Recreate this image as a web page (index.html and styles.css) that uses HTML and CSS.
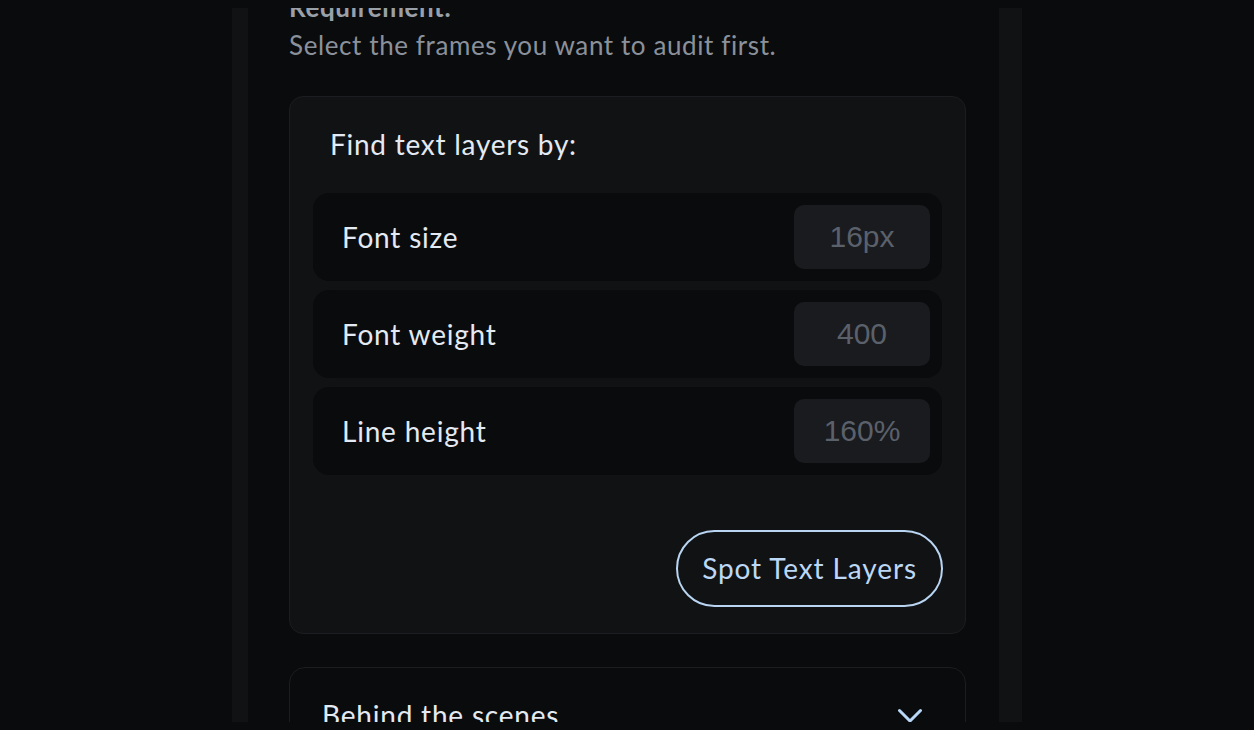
FILE: index.html
```html
<!DOCTYPE html>
<html lang="en">
<head>
<meta charset="utf-8">
<title>Text layer audit</title>
<link rel="stylesheet" href="styles.css">
</head>
<body>
<div class="frame">
  <div class="scroll">
    <div class="content">
      <h2 class="req-title">Requirement:</h2>
      <p class="req-text">Select the frames you want to audit first.</p>

      <section class="card">
        <h3 class="card-title">Find text layers by:</h3>
        <div class="rows">
          <div class="row">
            <span class="row-label">Font size</span>
            <span class="row-input">16px</span>
          </div>
          <div class="row">
            <span class="row-label">Font weight</span>
            <span class="row-input">400</span>
          </div>
          <div class="row">
            <span class="row-label">Line height</span>
            <span class="row-input">160%</span>
          </div>
        </div>
        <button class="spot-btn" type="button">Spot Text Layers</button>
      </section>

      <section class="accordion">
        <div class="acc-head">
          <span class="acc-title">Behind the scenes</span>
          <svg class="chev" width="26" height="16" viewBox="0 0 26 16" aria-hidden="true">
            <path d="M2.5 2.5 L13 13 L23.5 2.5" fill="none" stroke="#b8d6f5" stroke-width="3" stroke-linecap="round" stroke-linejoin="round"/>
          </svg>
        </div>
      </section>
    </div>
  </div>
</div>
</body>
</html>
```

FILE: styles.css
```css
html, body {
  background: #0a0b0c;
}
body {
  margin: 8px;
  font-family: Lato, "Open Sans", sans-serif;
}
.frame {
  width: 790px;
  height: 714px;
  margin: 0 auto;
  background: #111214;
  display: flex;
  padding: 0 23px 0 16px;
  box-sizing: border-box;
}
.scroll {
  flex: 1;
  background: #0a0b0c;
  overflow: hidden;
  padding: 0 33px 0 41px;
}
.content {
  margin-top: -20px;
}
.req-title {
  margin: 0;
  font-size: 26px;
  line-height: 38.4px;
  font-weight: 700;
  letter-spacing: 0.6px;
  color: #9aa0a8;
}
.req-text {
  margin: 0;
  font-size: 26px;
  line-height: 38.4px;
  letter-spacing: 0.6px;
  color: #8a919b;
}
.card {
  margin-top: 31px;
  background: #111214;
  border: 1px solid #1b1d20;
  border-radius: 14px;
  padding: 25px 23px 26px;
  display: flex;
  flex-direction: column;
}
.card-title {
  margin: 0 0 26px 17px;
  font-size: 28px;
  line-height: 44.8px;
  font-weight: 400;
  letter-spacing: 0.75px;
  color: #e4eaf3;
}
.rows {
  display: flex;
  flex-direction: column;
  gap: 9px;
}
.row {
  height: 88px;
  box-sizing: border-box;
  background: #0a0b0c;
  border-radius: 16px;
  display: flex;
  align-items: center;
  justify-content: space-between;
  padding: 0 12px 0 29px;
}
.row-label {
  font-size: 28px;
  letter-spacing: 0.8px;
  color: #e4eaf3;
}
.row-input {
  width: 136px;
  height: 64px;
  background: #1a1b1f;
  border-radius: 10px;
  display: flex;
  align-items: center;
  justify-content: center;
  font-family: "Liberation Sans", Arial, sans-serif;
  font-size: 30px;
  color: #5b616b;
}
.spot-btn {
  align-self: flex-end;
  margin-top: 55px;
  margin-right: -1px;
  height: 77px;
  box-sizing: border-box;
  padding: 0 24px;
  background: transparent;
  border: 2px solid #b9d5f2;
  border-radius: 39px;
  font-family: Lato, "Open Sans", sans-serif;
  font-size: 28px;
  letter-spacing: 0.9px;
  color: #bcd8f6;
  cursor: pointer;
}
.accordion {
  margin-top: 33px;
  border: 1px solid #1b1d20;
  border-radius: 16px;
  background: #0a0b0c;
  height: 120px;
}
.acc-head {
  display: flex;
  align-items: center;
  justify-content: space-between;
  padding: 25px 42px 0 32px;
}
.acc-title {
  font-size: 28px;
  line-height: 44.8px;
  letter-spacing: 0.8px;
  color: #e4eaf3;
}
.chev {
  display: block;
  margin-top: 2px;
}
```
